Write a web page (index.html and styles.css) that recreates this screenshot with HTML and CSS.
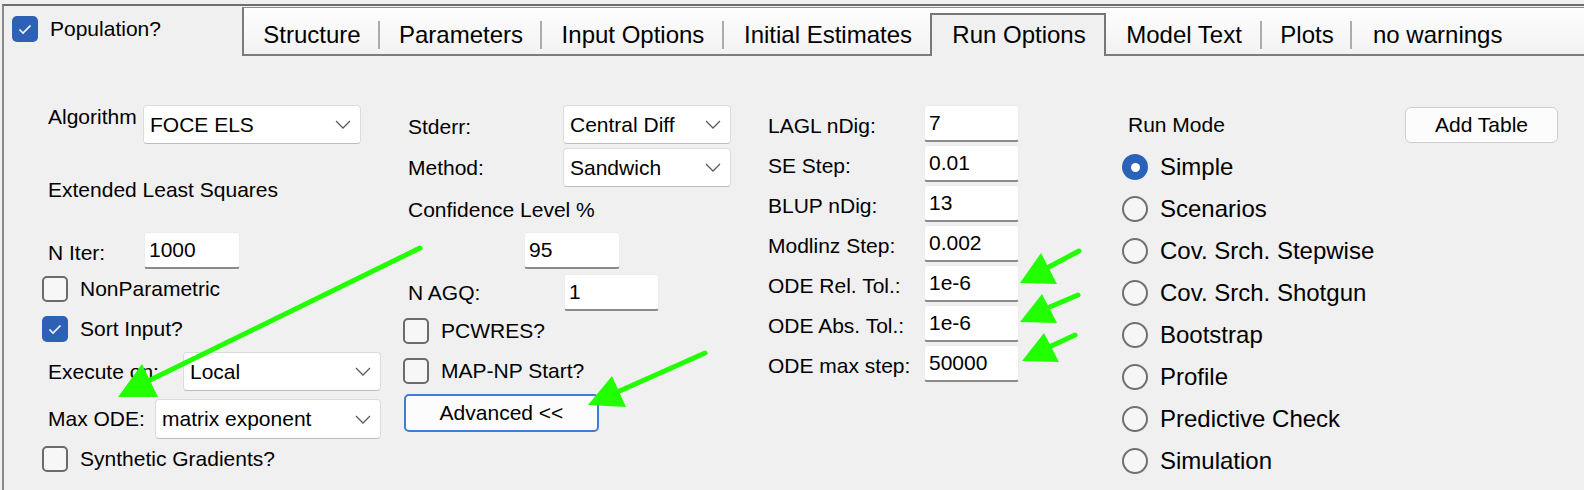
FILE: index.html
```html
<!DOCTYPE html>
<html>
<head>
<meta charset="utf-8">
<title>Run Options</title>
<link rel="stylesheet" href="styles.css">
</head>
<body>
<div class="window">
  <div class="header">
    <div class="pop">
      <span class="cb on"><svg viewBox="0 0 26 26" width="26" height="26"><polyline points="7.5,13.5 11,17 18.5,9.5" fill="none" stroke="#fff" stroke-width="1.6"/></svg></span>
      <span>Population?</span>
    </div>
    <div class="tabstrip">
      <div class="tab tab-structure">Structure</div><span class="sep"></span>
      <div class="tab tab-params">Parameters</div><span class="sep"></span>
      <div class="tab tab-input">Input Options</div><span class="sep"></span>
      <div class="tab tab-initial">Initial Estimates</div>
      <div class="tab active">Run Options</div>
      <div class="tab tab-model">Model Text</div><span class="sep"></span>
      <div class="tab tab-plots">Plots</div><span class="sep"></span>
      <div class="tab tab-warn">no warnings</div>
    </div>
  </div>

  <div class="content">
    <!-- column 1 -->
    <div class="col">
      <div class="row row-alg">
        <span class="lbl lbl-alg">Algorithm</span>
        <div class="dd dd-alg"><span>FOCE ELS</span><svg class="chev" viewBox="0 0 16 9" width="16" height="9"><polyline points="1,1 8,8 15,1" fill="none" stroke="#5c5c5c" stroke-width="1.3"/></svg></div>
      </div>
      <div class="row row-els"><span class="lbl">Extended Least Squares</span></div>
      <div class="row row-niter">
        <span class="lbl lbl-niter lbl-low">N Iter:</span>
        <div class="tb tb-wide">1000</div>
      </div>
      <div class="row check row-nonpar"><span class="cb"></span><span>NonParametric</span></div>
      <div class="row check row-sort"><span class="cb on"><svg viewBox="0 0 26 26" width="26" height="26"><polyline points="7.5,13.5 11,17 18.5,9.5" fill="none" stroke="#fff" stroke-width="1.6"/></svg></span><span>Sort Input?</span></div>
      <div class="row row-exec">
        <span class="lbl lbl-exec">Execute on:</span>
        <div class="dd dd-exec"><span>Local</span><svg class="chev" viewBox="0 0 16 9" width="16" height="9"><polyline points="1,1 8,8 15,1" fill="none" stroke="#5c5c5c" stroke-width="1.3"/></svg></div>
      </div>
      <div class="row row-maxode">
        <span class="lbl lbl-maxode">Max ODE:</span>
        <div class="dd dd-maxode"><span>matrix exponent</span><svg class="chev" viewBox="0 0 16 9" width="16" height="9"><polyline points="1,1 8,8 15,1" fill="none" stroke="#5c5c5c" stroke-width="1.3"/></svg></div>
      </div>
      <div class="row check row-synth"><span class="cb"></span><span>Synthetic Gradients?</span></div>
    </div>

    <!-- column 2 -->
    <div class="col">
      <div class="row row-stderr">
        <span class="lbl lbl-c2 lbl-low">Stderr:</span>
        <div class="dd dd-c2"><span>Central Diff</span><svg class="chev" viewBox="0 0 16 9" width="16" height="9"><polyline points="1,1 8,8 15,1" fill="none" stroke="#5c5c5c" stroke-width="1.3"/></svg></div>
      </div>
      <div class="row row-method">
        <span class="lbl lbl-c2">Method:</span>
        <div class="dd dd-c2"><span>Sandwich</span><svg class="chev" viewBox="0 0 16 9" width="16" height="9"><polyline points="1,1 8,8 15,1" fill="none" stroke="#5c5c5c" stroke-width="1.3"/></svg></div>
      </div>
      <div class="row row-conf"><span class="lbl">Confidence Level %</span></div>
      <div class="row row-95"><div class="tb tb-wide">95</div></div>
      <div class="row row-nagq">
        <span class="lbl lbl-nagq">N AGQ:</span>
        <div class="tb">1</div>
      </div>
      <div class="row check row-pcwres"><span class="cb"></span><span>PCWRES?</span></div>
      <div class="row check row-mapnp"><span class="cb"></span><span>MAP-NP Start?</span></div>
      <div class="row row-adv"><button class="btn btn-adv">Advanced &lt;&lt;</button></div>
    </div>

    <!-- column 3 -->
    <div class="col col-num">
      <span class="lbl lbl-low">LAGL nDig:</span><div class="tb">7</div>
      <span class="lbl lbl-low">SE Step:</span><div class="tb">0.01</div>
      <span class="lbl lbl-low">BLUP nDig:</span><div class="tb">13</div>
      <span class="lbl lbl-low">Modlinz Step:</span><div class="tb">0.002</div>
      <span class="lbl lbl-low">ODE Rel. Tol.:</span><div class="tb">1e-6</div>
      <span class="lbl lbl-low">ODE Abs. Tol.:</span><div class="tb">1e-6</div>
      <span class="lbl lbl-low">ODE max step:</span><div class="tb">50000</div>
    </div>

    <!-- column 4 -->
    <div class="col col-mode">
      <div class="row row-mode">
        <span class="lbl lbl-mode">Run Mode</span>
        <button class="btn btn-add">Add Table</button>
      </div>
      <div class="radios">
        <div class="radio"><span class="rb on"></span><span>Simple</span></div>
        <div class="radio"><span class="rb"></span><span>Scenarios</span></div>
        <div class="radio"><span class="rb"></span><span>Cov. Srch. Stepwise</span></div>
        <div class="radio"><span class="rb"></span><span>Cov. Srch. Shotgun</span></div>
        <div class="radio"><span class="rb"></span><span>Bootstrap</span></div>
        <div class="radio"><span class="rb"></span><span>Profile</span></div>
        <div class="radio"><span class="rb"></span><span>Predictive Check</span></div>
        <div class="radio"><span class="rb"></span><span>Simulation</span></div>
      </div>
    </div>
  </div>
</div>

<svg class="arrows" width="1584" height="490" viewBox="0 0 1584 490">
  <g stroke="#22ff00" stroke-width="5" stroke-linecap="round">
    <line x1="420" y1="248" x2="146" y2="382"/>
    <line x1="705" y1="353" x2="615" y2="393"/>
    <line x1="1079" y1="251" x2="1045" y2="269"/>
    <line x1="1078" y1="295" x2="1045" y2="309"/>
    <line x1="1075" y1="335" x2="1047" y2="348"/>
  </g>
  <g fill="#22ff00">
    <polygon points="118,397 142,364 158,397"/>
    <polygon points="588,405 612,376 626,407"/>
    <polygon points="1020,283 1041,253 1057,284"/>
    <polygon points="1020,322 1042,294 1057,323"/>
    <polygon points="1022,361 1044,333 1059,362"/>
  </g>
</svg>
</body>
</html>
```

FILE: styles.css
```css
* { box-sizing: border-box; }

html, body { margin: 0; padding: 0; }

body {
  width: 1584px;
  height: 490px;
  position: relative;
  overflow: hidden;
  background: #f0f0f0;
  color: #000;
  font-family: "Liberation Sans", Arial, sans-serif;
  font-size: 21px;
}

.window {
  margin: 4px 0 0 2px;
  height: 486px;
  border-top: 2px solid #6e6e6e;
  border-left: 2px solid #8a8a8a;
}

/* ---------- header ---------- */
.header {
  display: flex;
  height: 50px;
}

.pop {
  width: 238px;
  flex: none;
  align-self: flex-start;
  display: flex;
  align-items: center;
  gap: 12px;
  padding: 10px 0 0 8px;
  line-height: 26px;
}

.tabstrip {
  flex: 1;
  display: flex;
  height: 49px;
  margin-top: 1px;
  border-top: 1px solid #8f8f8f;
  border-left: 2px solid #7c7c7c;
  border-bottom: 2px solid #7c7c7c;
  background: linear-gradient(#fefefe, #f2f2f2);
  font-size: 24px;
  line-height: 28px;
}

.tab {
  flex: none;
  padding-top: 13px;
  padding-left: 2px;
  text-align: center;
  white-space: nowrap;
}

.sep {
  flex: none;
  width: 2px;
  height: 28px;
  margin-top: 13px;
  background: #acacac;
}

.tab-structure { width: 134px; }
.tab-params { width: 160px; }
.tab-input { width: 180px; }
.tab-initial { width: 206px; }
.tab-model { width: 154px; }
.tab-plots { width: 88px; }
.tab-warn { padding-left: 21px; text-align: left; }

.tab.active {
  width: 176px;
  margin-top: 5px;
  margin-bottom: -2px;
  padding-top: 6px;
  border: 2px solid #777;
  border-bottom: 0;
  background: #f0f0f0;
}

/* ---------- content ---------- */
.content {
  display: grid;
  grid-template-columns: 360px 360px 360px 1fr;
  padding: 49px 0 0 38px;
}

.col {
  display: flex;
  flex-direction: column;
}

.row {
  display: flex;
  align-items: center;
}

.lbl {
  flex: none;
  padding-left: 6px;
  line-height: 24px;
  white-space: nowrap;
}

.lbl-low { padding-top: 5px; }

.check { gap: 12px; height: 26px; line-height: 26px; }

/* checkbox */
.cb {
  flex: none;
  width: 26px;
  height: 26px;
  border: 2px solid #6b6b6b;
  border-radius: 5px;
  background: #f7f7f7;
  display: block;
  position: relative;
}
.cb.on {
  border: 0;
  background: #2c61b6;
}
.cb svg { display: block; }

/* dropdown */
.dd {
  flex: none;
  height: 39px;
  display: flex;
  align-items: center;
  justify-content: space-between;
  padding: 0 9px 0 6px;
  background: #fff;
  border: 1px solid #dcdcdc;
  border-bottom-color: #bdbdbd;
  border-radius: 4px;
  white-space: nowrap;
}
.chev { display: block; flex: none; }

/* text box */
.tb {
  flex: none;
  width: 95px;
  height: 37px;
  display: flex;
  align-items: center;
  padding-left: 4px;
  background: #fff;
  border: 1px solid #ececec;
  border-bottom: 2px solid #8a8a8a;
  border-radius: 3px;
}
.tb-wide { width: 96px; }

/* buttons */
.btn {
  font: inherit;
  color: #000;
  padding: 0;
  background: #fcfcfc;
  border-radius: 5px;
  cursor: default;
}

/* column 1 rows */
.row-alg { align-items: flex-start; height: 39px; }
.lbl-alg { width: 101px; }
.dd-alg { width: 218px; }
.row-els { margin-top: 34px; height: 24px; }
.row-niter { margin-top: 30px; }
.lbl-niter { width: 102px; }
.row-nonpar { margin-top: 7px; }
.row-sort { margin-top: 14px; }
.row-exec { margin-top: 10px; }
.lbl-exec { width: 141px; }
.dd-exec { width: 198px; }
.row-maxode { margin-top: 8px; }
.lbl-maxode { width: 113px; }
.dd-maxode { width: 226px; height: 40px; }
.row-synth { margin-top: 7px; }

/* column 2 rows */
.lbl-c2 { width: 161px; }
.dd-c2 { width: 168px; }
.row-method { margin-top: 4px; }
.row-conf { margin-top: 11px; height: 24px; }
.row-95 { margin-top: 10px; padding-left: 122px; }
.row-nagq { margin-top: 5px; }
.lbl-nagq { width: 162px; }
.row-pcwres { margin-top: 7px; padding-left: 1px; }
.row-mapnp { margin-top: 14px; padding-left: 1px; }
.row-adv { margin-top: 10px; padding-left: 2px; }
.btn-adv {
  width: 195px;
  height: 38px;
  border: 2px solid #3f7dd3;
}

/* column 3 */
.col-num {
  display: grid;
  grid-template-columns: 162px 95px;
  grid-auto-rows: 37px;
  row-gap: 3px;
  align-items: center;
  align-content: start;
}

/* column 4 */
.col-mode { padding-top: 2px; }
.row-mode { height: 36px; }
.lbl-mode { width: 283px; }
.btn-add {
  width: 153px;
  height: 36px;
  border: 1px solid #cdcdcd;
  border-radius: 6px;
  box-shadow: inset 0 0 0 1px #fff;
}

.radios {
  margin-top: 3px;
  display: flex;
  flex-direction: column;
  font-size: 24px;
}
.radio {
  height: 42px;
  display: flex;
  align-items: center;
  gap: 12px;
  white-space: nowrap;
}
.rb {
  flex: none;
  width: 26px;
  height: 26px;
  border-radius: 50%;
  border: 2px solid #707070;
  background: #f6f6f6;
  display: flex;
  align-items: center;
  justify-content: center;
}
.rb.on {
  border: 0;
  background: #2a62b7;
}
.rb.on::after {
  content: "";
  width: 9px;
  height: 9px;
  border-radius: 50%;
  background: #fff;
}

/* annotation arrows (overlay) */
.arrows {
  position: absolute;
  left: 0;
  top: 0;
  pointer-events: none;
}
```
